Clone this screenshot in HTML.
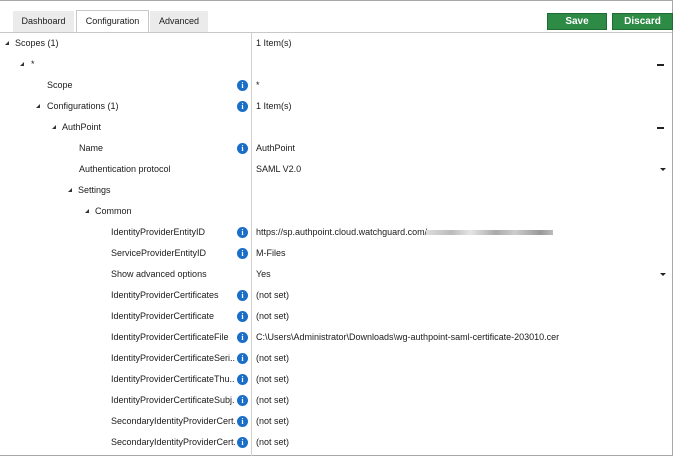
<!DOCTYPE html>
<html><head><style>
*{margin:0;padding:0;box-sizing:border-box}
body{width:673px;height:456px;background:#fff;font-family:"Liberation Sans",sans-serif;font-size:9px;color:#1a1a1a;position:relative;overflow:hidden}
.frame{position:absolute;left:0;top:0;width:673px;height:456px;border:1px solid #a8a8a8;border-left:none}
.tab{position:absolute;top:11px;height:21px;background:#ebebeb;line-height:21px;text-align:center;font-size:9px}
.tab.act{background:#fff;border:1px solid #c8c8c8;border-bottom:none;height:22px;top:10px}
.tl{position:absolute;left:0;top:32px;width:672px;height:1px;background:#c8c8c8}
.vl{position:absolute;left:251px;top:33px;width:1px;height:423px;background:#d0d0d0}
.btn{position:absolute;top:13px;height:17px;background:#2e8b46;border:1px solid #1e6b33;color:#fff;font-weight:bold;font-size:10px;line-height:16px;text-align:center}
.r{position:absolute;height:21px;line-height:21px;white-space:nowrap}
.c{max-width:124px;overflow:hidden}
.t{position:absolute;width:0;height:0;border-left:4px solid transparent;border-bottom:4px solid #333}
.i{position:absolute;left:237px;width:11px;height:11px;border-radius:50%;background:#1a6ec8;color:#fff;font-weight:bold;font-size:8px;line-height:11px;text-align:center;font-family:"Liberation Serif",serif}
.dash{position:absolute;left:657px;width:7px;height:1.5px;background:#222}
.dd{position:absolute;left:660px;width:0;height:0;border-left:3px solid transparent;border-right:3px solid transparent;border-top:3px solid #222}
</style></head><body>
<div class="frame"></div>
<div class="tab" style="left:13px;width:61px">Dashboard</div>
<div class="tab act" style="left:76px;width:73px">Configuration</div>
<div class="tab" style="left:150px;width:58px">Advanced</div>
<div class="tl"></div>
<div class="btn" style="left:547px;width:60px">Save</div>
<div class="btn" style="left:612px;width:61px">Discard</div>
<div class="vl"></div>

<div class="t" style="left:5px;top:41px"></div><div class="r" style="left:15px;top:33px">Scopes (1)</div><div class="r" style="left:256px;top:33px">1 Item(s)</div>
<div class="t" style="left:20px;top:62px"></div><div class="r" style="left:31px;top:54px">*</div><div class="dash" style="top:64px"></div>
<div class="r" style="left:47px;top:75px">Scope</div><div class="i" style="top:80px">i</div><div class="r" style="left:256px;top:75px">*</div>
<div class="t" style="left:36px;top:104px"></div><div class="r" style="left:47px;top:96px">Configurations (1)</div><div class="i" style="top:101px">i</div><div class="r" style="left:256px;top:96px">1 Item(s)</div>
<div class="t" style="left:52px;top:125px"></div><div class="r" style="left:62px;top:117px">AuthPoint</div><div class="dash" style="top:127px"></div>
<div class="r" style="left:79px;top:138px">Name</div><div class="i" style="top:143px">i</div><div class="r" style="left:256px;top:138px">AuthPoint</div>
<div class="r" style="left:79px;top:159px">Authentication protocol</div><div class="r" style="left:256px;top:159px">SAML V2.0</div><div class="dd" style="top:168px"></div>
<div class="t" style="left:68px;top:188px"></div><div class="r" style="left:78px;top:180px">Settings</div>
<div class="t" style="left:85px;top:209px"></div><div class="r" style="left:95px;top:201px">Common</div>
<div class="r" style="left:111px;top:222px">IdentityProviderEntityID</div><div class="i" style="top:227px">i</div><div class="r" style="left:256px;top:222px">https://sp.authpoint.cloud.watchguard.com/</div><div style="position:absolute;left:426px;top:230px;width:127px;height:5px;background:linear-gradient(90deg,#ddd,#bbb 20%,#e5e5e5 35%,#aaa 55%,#ccc 70%,#999 90%,#bbb)"></div>
<div class="r" style="left:111px;top:243px">ServiceProviderEntityID</div><div class="i" style="top:248px">i</div><div class="r" style="left:256px;top:243px">M-Files</div>
<div class="r" style="left:111px;top:264px">Show advanced options</div><div class="r" style="left:256px;top:264px">Yes</div><div class="dd" style="top:273px"></div>
<div class="r" style="left:111px;top:285px">IdentityProviderCertificates</div><div class="i" style="top:290px">i</div><div class="r" style="left:256px;top:285px">(not set)</div>
<div class="r" style="left:111px;top:306px">IdentityProviderCertificate</div><div class="i" style="top:311px">i</div><div class="r" style="left:256px;top:306px">(not set)</div>
<div class="r" style="left:111px;top:327px">IdentityProviderCertificateFile</div><div class="i" style="top:332px">i</div><div class="r" style="left:256px;top:327px">C:\Users\Administrator\Downloads\wg-authpoint-saml-certificate-203010.cer</div>
<div class="r c" style="left:111px;top:348px">IdentityProviderCertificateSeri...</div><div class="i" style="top:353px">i</div><div class="r" style="left:256px;top:348px">(not set)</div>
<div class="r c" style="left:111px;top:369px">IdentityProviderCertificateThu...</div><div class="i" style="top:374px">i</div><div class="r" style="left:256px;top:369px">(not set)</div>
<div class="r c" style="left:111px;top:390px">IdentityProviderCertificateSubj...</div><div class="i" style="top:395px">i</div><div class="r" style="left:256px;top:390px">(not set)</div>
<div class="r c" style="left:111px;top:411px">SecondaryIdentityProviderCert...</div><div class="i" style="top:416px">i</div><div class="r" style="left:256px;top:411px">(not set)</div>
<div class="r c" style="left:111px;top:432px">SecondaryIdentityProviderCert...</div><div class="i" style="top:437px">i</div><div class="r" style="left:256px;top:432px">(not set)</div>
</body></html>
